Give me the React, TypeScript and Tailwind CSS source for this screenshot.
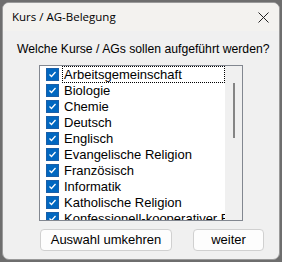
import React, { useState } from "react";

const kurse = [
  "Arbeitsgemeinschaft",
  "Biologie",
  "Chemie",
  "Deutsch",
  "Englisch",
  "Evangelische Religion",
  "Französisch",
  "Informatik",
  "Katholische Religion",
  "Konfessionell-kooperativer Religionsunterricht",
];

function CheckBox() {
  return (
    <span className="flex h-[13px] w-[13px] shrink-0 items-center justify-center bg-[#0067c0] border border-[#1a5fa8]">
      <svg width="9" height="9" viewBox="0 0 9 9">
        <path d="M1.5 4.5 L3.5 6.5 L7.5 2" stroke="white" strokeWidth="1.3" fill="none" />
      </svg>
    </span>
  );
}

export default function App() {
  const [checked] = useState(kurse.map(() => true));

  return (
    <div className="h-[262px] w-[282px] bg-[#6e6e6e] p-[2px] font-['Liberation_Sans',Arial,sans-serif]">
      <div className="flex h-full flex-col overflow-hidden rounded-[7px] border border-[#9a9a9a] bg-[#f0f0f0]">
        {/* title bar */}
        <div className="flex h-[28px] shrink-0 items-center justify-between bg-[#f3f2ef] pl-[9px] pr-[10px]">
          <span className="text-[11.5px] text-black font-['Open_Sans',sans-serif]">Kurs / AG-Belegung</span>
          <svg width="11" height="11" viewBox="0 0 11 11">
            <path d="M0.5 0.5 L10.5 10.5 M10.5 0.5 L0.5 10.5" stroke="#222" strokeWidth="1" />
          </svg>
        </div>

        <div className="flex flex-1 flex-col px-[36px]">
          <div className="mt-[10px] -mx-[22px] text-center text-[12.2px] leading-[16px] text-black whitespace-nowrap">
            Welche Kurse / AGs sollen aufgeführt werden?
          </div>

          <div className="mt-[8px] flex h-[156px] border border-[#828790] bg-white">
            <div className="flex-1 overflow-hidden">
              {kurse.map((k, i) => (
                <div key={k} className="flex h-[16px] items-center pl-[6px]">
                  {checked[i] && <CheckBox />}
                  <span
                    className={
                      "ml-[3px] whitespace-nowrap px-[1px] text-[13px] leading-[15px] text-black " +
                      (i === 0 ? "flex-1 border border-dotted border-black" : "border border-transparent")
                    }
                  >
                    {k}
                  </span>
                </div>
              ))}
            </div>
            <div className="flex w-[17px] shrink-0 justify-center bg-[#f0f0f0]">
              <div className="mt-[17px] h-[55px] w-[2px] bg-[#858585]" />
            </div>
          </div>

          <div className="mt-[8px] -mr-[21px] ml-[1px] flex justify-between">
            <button className="h-[22px] w-[132px] rounded-[4px] border border-[#d0d0d0] bg-[#fdfdfd] text-[13px] text-black">
              Auswahl umkehren
            </button>
            <button className="h-[22px] w-[71px] rounded-[4px] border border-[#d0d0d0] bg-[#fdfdfd] text-[13px] text-black">
              weiter
            </button>
          </div>
        </div>
      </div>
    </div>
  );
}
